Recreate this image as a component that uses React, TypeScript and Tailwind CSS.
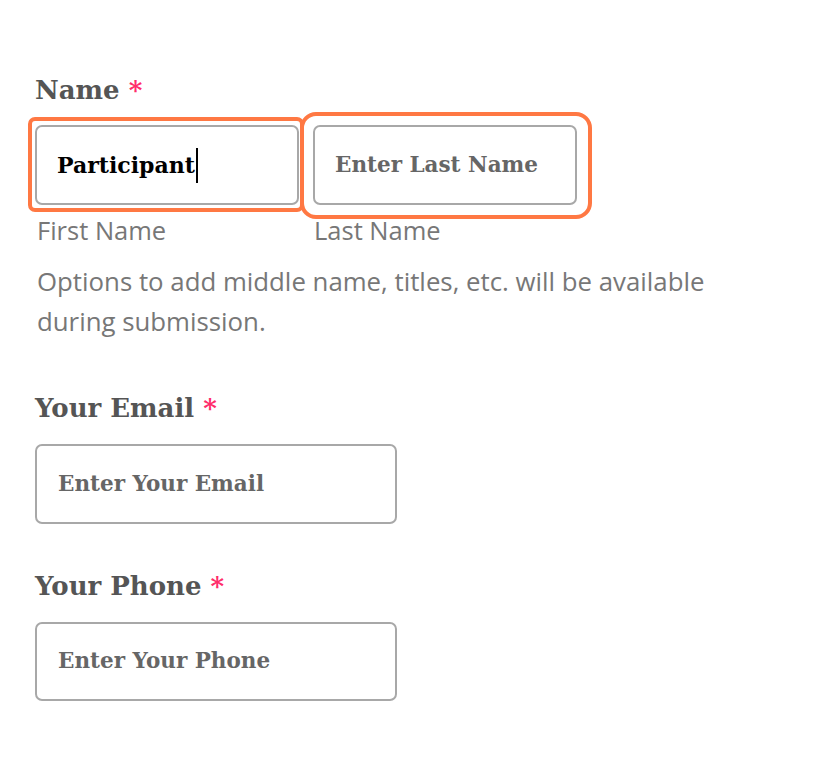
const slab = "font-['DejaVu_Serif',serif]";
const sans = "font-['Open_Sans',sans-serif]";

function Label({ text }: { text: string }) {
    return (
        <div className={`${slab} font-bold text-[26px] leading-[30px] text-[#555]`}>
            {text} <span className="text-[#ff2d6b]">*</span>
        </div>
    );
}

export default function App() {
    return (
        <div className="min-h-screen bg-white pl-[35px] pt-[75px]">
            {/* Name */}
            <Label text="Name" />
            <div className="mt-[20px] flex gap-[14px]">
                <div className="flex flex-col">
                    <div className="relative">
                        <div className="absolute -left-[7px] -top-[8px] -right-[5px] -bottom-[7px] rounded-[7px] border-[4px] border-[#ff7843]" />
                        <div className={`relative flex h-[80px] w-[264px] items-center rounded-[7px] border-2 border-[#a8a8a8] bg-white pl-[20px] ${slab} font-bold text-[22px] text-black`}>
                            Participant
                            <span className="ml-[1px] h-[35px] w-[2px] bg-black" />
                        </div>
                    </div>
                    <span className={`${sans} mt-[9px] pl-[2px] text-[25.5px] leading-[32px] text-[#777]`}>First Name</span>
                </div>
                <div className="flex flex-col">
                    <div className="relative">
                        <div className="absolute -left-[13px] -top-[13px] -right-[15px] -bottom-[14px] rounded-[16px] border-[4px] border-[#ff7843]" />
                        <div className={`relative flex h-[80px] w-[264px] items-center rounded-[7px] border-2 border-[#a8a8a8] bg-white pl-[20px] ${slab} font-bold text-[21.5px] text-[#666]`}>
                            Enter Last Name
                        </div>
                    </div>
                    <span className={`${sans} mt-[9px] pl-[1px] text-[25.5px] leading-[32px] text-[#777]`}>Last Name</span>
                </div>
            </div>
            <p className={`${sans} mt-[15px] w-[720px] pl-[2px] text-[25.8px] leading-[40px] text-[#777]`}>
                Options to add middle name, titles, etc. will be available during submission.
            </p>

            {/* Email */}
            <div className="mt-[52px]">
                <Label text="Your Email" />
                <div className={`mt-[21px] flex h-[80px] w-[362px] items-center rounded-[7px] border-2 border-[#a8a8a8] pl-[21px] ${slab} font-bold text-[21.5px] text-[#666]`}>
                    Enter Your Email
                </div>
            </div>

            {/* Phone */}
            <div className="mt-[47px]">
                <Label text="Your Phone" />
                <div className={`mt-[21px] flex h-[79px] w-[362px] items-center rounded-[7px] border-2 border-[#a8a8a8] pl-[21px] ${slab} font-bold text-[21.5px] text-[#666]`}>
                    Enter Your Phone
                </div>
            </div>
        </div>
    );
}
